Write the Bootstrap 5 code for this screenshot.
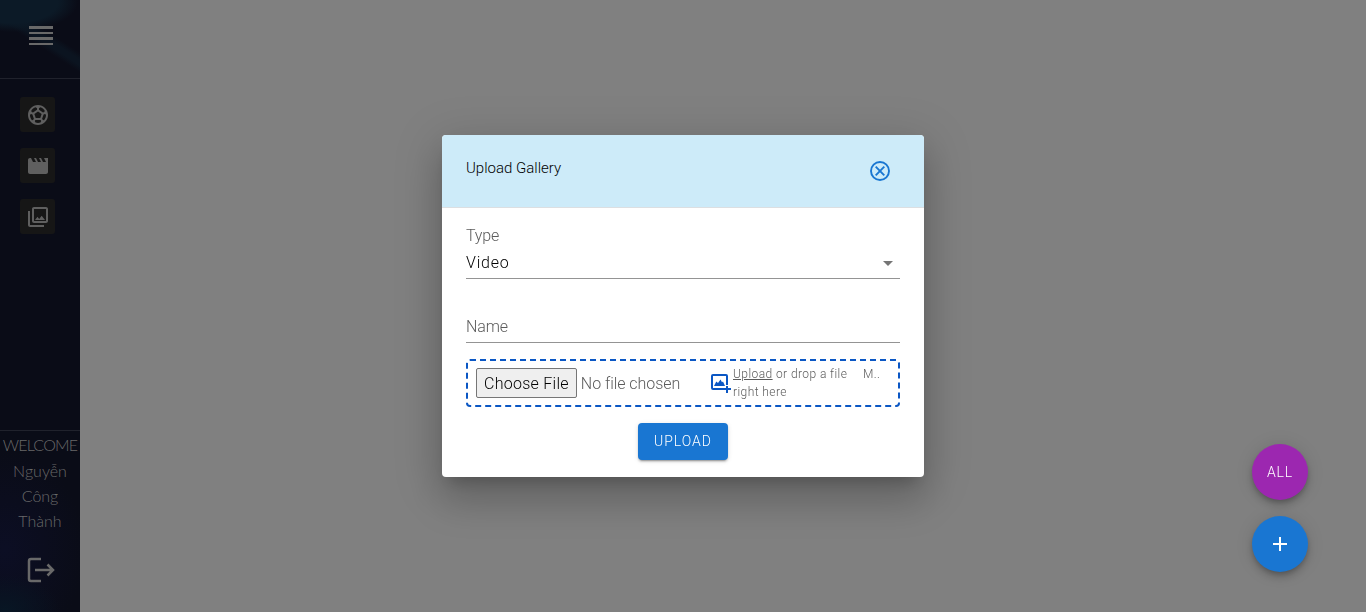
<!DOCTYPE html>
<html lang="en">
<head>
<meta charset="utf-8">
<meta name="viewport" content="width=device-width, initial-scale=1">
<title>Gallery</title>
<link href="https://cdn.jsdelivr.net/npm/bootstrap@5.3.0/dist/css/bootstrap.min.css" rel="stylesheet">
<style>
body{background:#808080;font-family:Roboto,"Liberation Sans",sans-serif;font-weight:300;overflow:hidden}
svg{display:block;fill:currentColor}
.side{width:80px;color:#696969;font-family:Lato,"Open Sans",sans-serif;
 background:radial-gradient(ellipse 66px 30px at 12px 2px,#0c1a27 0 70%,transparent 100%),
 linear-gradient(213deg,transparent 0 44px,#0b1420 50px 55px,transparent 61px) 0 0/80px 78px no-repeat,
 radial-gradient(ellipse 55px 35px at 5px 610px,#081624,transparent),
 radial-gradient(ellipse 80px 100px at 5px 550px,#0c0e24,transparent),#0a0c17}
.side-head{height:79px;padding:26px 0 0 29px;border-bottom:1px solid #20222c}
.bars{width:24px;height:19px}
.bars i{height:2.5px;background:#696969}
.tile{width:35px;height:35px;background:#161616;border-radius:3px;color:#5f5f5f}
.side-menu{padding:18px 0 0 20px;gap:16px}
.side-foot{height:182px;border-top:1px solid #20222c;font-size:16px;line-height:25px;padding-top:2px}
.welcome{letter-spacing:-.8px;margin:-1px -4px 1px}
.exit{margin:21px 0 0 25px}
.dialog{width:482px;height:342px;background:#fff;border-radius:4px;color:#000;
 box-shadow:0 11px 15px -7px rgba(0,0,0,.2),0 24px 38px 3px rgba(0,0,0,.14),0 9px 46px 8px rgba(0,0,0,.12)}
.dialog-head{height:73px;background:#cdebf9;border-bottom:1px solid #dcdfe2;border-radius:4px 4px 0 0;padding:24px 32px 0 24px;font-size:15px;line-height:18px}
.close-ic{color:#1976d2;fill:none;stroke:currentColor;stroke-width:1.9}
.muted{color:#5c5c5c}
.line-field{border-bottom:1px solid #949494}
.lbl{font-size:16px;line-height:23px;letter-spacing:-.15px}
.type-f{height:71px;padding-top:16px}
.type-v{height:32px;font-size:16px;line-height:32px;letter-spacing:.8px}
.arrow{color:#757575}
.name-f{height:64px;padding-top:36px}
.drop{height:48px;margin-top:16px;border:2px dashed #0b57c4;border-radius:4px;padding-left:8px}
.file-in{width:233px;font-size:16px;font-weight:300;line-height:26px;height:30px;letter-spacing:-.05px}
.file-in::file-selector-button{font:300 16px/26px Roboto,sans-serif;letter-spacing:.27px;height:30px;border:1px solid #767676;border-radius:2px;background:#efefef;color:#000;padding:2px 7px 0;margin-right:4px}
.hint{font-size:12px;line-height:18px;letter-spacing:.42px;width:130px}
.hint-more{width:30px;padding-top:4px}
.add-photo{color:#0b57c4}
.up-btn{width:90px;height:37px;background:#1976d2;color:#fff;border-radius:4px;font-size:14px;letter-spacing:1px;margin-top:16px;
 box-shadow:0 3px 1px -2px rgba(0,0,0,.2),0 2px 2px rgba(0,0,0,.14),0 1px 5px rgba(0,0,0,.12)}
.fabs{right:58px;bottom:40px;gap:16px}
.fab{width:56px;height:56px;color:#fff;font-size:14px;letter-spacing:.9px;
 box-shadow:0 3px 5px -1px rgba(0,0,0,.2),0 6px 10px rgba(0,0,0,.14),0 1px 18px rgba(0,0,0,.12)}
.fab-all{background:#9c27b0}.fab-add{background:#1976d2}
</style>
</head>
<body>
<div class="vh-100 d-flex">
<aside class="side d-flex flex-column flex-shrink-0">
 <div class="side-head"><div class="bars d-flex flex-column justify-content-between"><i></i><i></i><i></i><i></i></div></div>
 <nav class="side-menu d-flex flex-column">
  <a class="tile d-flex align-items-center justify-content-center"><svg width="24" height="24" viewBox="0 0 24 24"><path d="M12 2C6.48 2 2 6.48 2 12s4.48 10 10 10 10-4.48 10-10S17.520 2 12 2zm1 3.300l1.350-.95c1.820.56 3.370 1.760 4.380 3.340l-.39 1.340-1.350.46L13 6.700V5.300zm-3.350-.95L11 5.300v1.400L7.010 9.490l-1.350-.46-.39-1.340c1.010-1.570 2.560-2.770 4.380-3.340zM7.080 17.110l-1.140.1C4.730 15.810 4 13.990 4 12c0-.12.010-.23.020-.35l1-.73 1.380.48 1.460 4.340-.78 1.370zm7.420 2.480c-.79.260-1.630.410-2.500.410s-1.710-.15-2.500-.41l-.69-1.490.64-1.100h5.110l.64 1.110-.7 1.480zM14.270 15H9.730l-1.350-4.020L12 8.440l3.630 2.540L14.270 15zm3.790 2.210l-1.140-.1-.79-1.370 1.460-4.340 1.390-.47 1 .73c.010.110.020.220.020.34 0 1.990-.73 3.810-1.940 5.210z"/></svg></a>
  <a class="tile d-flex align-items-center justify-content-center"><svg width="24" height="24" viewBox="0 0 24 24"><path d="M18 4l2 4h-3l-2-4h-2l2 4h-3l-2-4H8l2 4H7L5 4H4c-1.100 0-1.990.9-1.990 2L2 18c0 1.100.9 2 2 2h16c1.100 0 2-.9 2-2V4h-4z"/></svg></a>
  <a class="tile d-flex align-items-center justify-content-center"><svg width="24" height="24" viewBox="0 0 24 24"><path d="M20 4v12H8V4h12m0-2H8c-1.100 0-2 .9-2 2v12c0 1.100.9 2 2 2h12c1.100 0 2-.9 2-2V4c0-1.100-.9-2-2-2zm-8.500 9.670l1.690 2.260 2.480-3.100L19 15H9zM2 6v14c0 1.100.9 2 2 2h14v-2H4V6H2z"/></svg></a>
 </nav>
 <div class="side-foot mt-auto text-center">
  <div class="welcome">WELCOME</div><div>Nguyễn</div><div>Công</div><div>Thành</div>
  <svg class="exit" width="32" height="32" viewBox="0 0 32 32"><path fill="none" stroke="currentColor" stroke-width="2.500" d="M16 5H6Q4 5 4 7V25Q4 27 6 27H16M10 16H28M22.500 10.500L28 16L22.500 21.500"/></svg>
 </div>
</aside>
<main class="flex-grow-1"></main>
</div>
<div class="position-fixed top-0 start-0 w-100 vh-100 d-flex align-items-center justify-content-center">
<div class="dialog" role="dialog">
 <div class="dialog-head d-flex justify-content-between"><span>Upload Gallery</span>
  <svg class="close-ic" width="24" height="24" viewBox="0 0 24 24"><circle cx="12" cy="12" r="9"/><path d="M7.700 7.700L16.300 16.300M16.300 7.700L7.700 16.300"/></svg></div>
 <div class="px-4">
  <div class="type-f line-field"><div class="lbl muted">Type</div>
   <div class="type-v d-flex justify-content-between align-items-center"><span>Video</span><svg class="arrow" width="24" height="24" viewBox="0 0 24 24"><path d="M7 10l5 5 5-5z"/></svg></div></div>
  <div class="name-f line-field"><div class="lbl muted">Name</div></div>
  <div class="drop d-flex align-items-center muted">
   <input type="file" class="file-in">
   <svg class="add-photo" width="24" height="24" viewBox="0 0 24 24"><path d="M19 15V5a2 2 0 0 0-2-2H4a2 2 0 0 0-2 2v12a2 2 0 0 0 2 2h10v-2H4V5h13v10zM11.500 8.500l-2.500 3.500-1.700-1.500L5 15h11l-2-4.500-1 .7zM17 14h2v3h3v2h-3v3h-2v-3h-3v-2h3z"/></svg>
   <div class="hint"><u>Upload</u> or drop a file<br>right here</div><div class="hint hint-more align-self-start">M..</div>
  </div>
  <button class="up-btn btn p-0 border-0 d-block mx-auto fw-light">UPLOAD</button>
 </div>
</div>
</div>
<div class="fabs position-fixed d-flex flex-column">
 <button class="fab fab-all btn rounded-circle p-0 border-0 fw-light">ALL</button>
 <button class="fab fab-add btn rounded-circle p-0 border-0 d-flex align-items-center justify-content-center"><svg width="24" height="24" viewBox="0 0 24 24"><path d="M19 13h-6v6h-2v-6H5v-2h6V5h2v6h6v2z"/></svg></button>
</div>
<script src="https://cdn.jsdelivr.net/npm/bootstrap@5.3.0/dist/js/bootstrap.bundle.min.js"></script>
</body>
</html>
